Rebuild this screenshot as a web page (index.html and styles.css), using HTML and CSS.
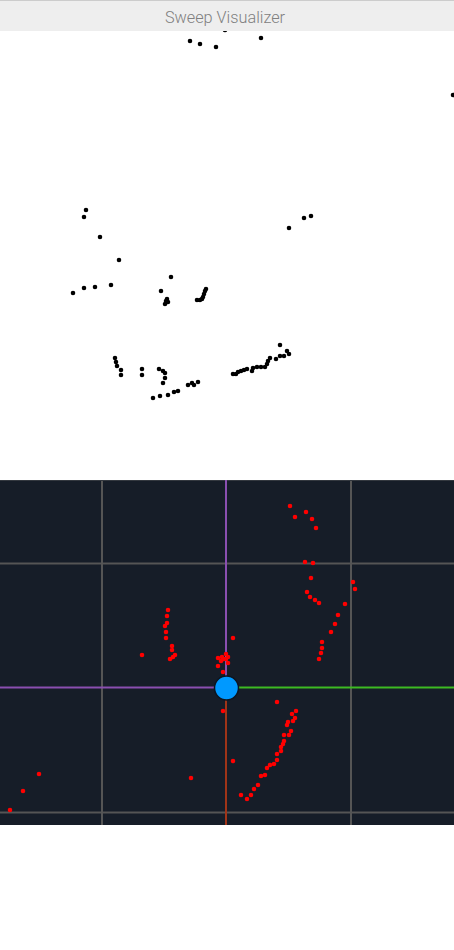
FILE: index.html
```html
<!DOCTYPE html>
<html lang="en">
<head>
  <meta charset="UTF-8">
  <title>Sweep Visualizer</title>
  <link rel="stylesheet" href="styles.css">
</head>
<body>

<header class="title-bar">Sweep Visualizer</header>

<!-- viewBoxes use page coordinates so the points are easy to compare -->
<svg class="view" width="454" height="449" viewBox="0 31 454 449">
  <path class="scan-black" d="M190 41h0M200 44h0M216 47h0M261 38h0M225 30h0M453 95h0
    M86 210h0M84 217h0M100 237h0M119 260h0M73 293h0M84 288h0M95 287h0M111 285h0M171 277h0M161 291h0
    M289 228h0M304 218h0M311 216h0
    M167 299h0M168 302h0M165 304h0M166 301h0
    M197 300h0M200 300h0M202 299h0M203 297h0M204 294h0M205 291h0M206 289h0
    M115 358h0M116 362h0M117 366h0M121 370h0M121 375h0M142 369h0M142 375h0
    M159 369h0M163 371h0M165 373h0M165 378h0M163 383h0
    M153 398h0M160 396h0M168 395h0M174 392h0M178 391h0M188 385h0M192 383h0M194 385h0M198 382h0
    M233 374h0M236 374h0M238 372h0M241 371h0M244 370h0M247 369h0M252 371h0M253 368h0M257 367h0M261 367h0M265 367h0
    M267 364h0M268 361h0M270 358h0M276 359h0M280 356h0M284 356h0M280 345h0M287 351h0M289 354h0"/>
</svg>

<svg class="view view-dark" width="454" height="345" viewBox="0 480 454 345">
  <path class="grid" d="M102 480V825M351 480V825M0 563.5H454M0 812.5H454"/>
  <path class="grid-top" d="M0 480.5H454"/>
  <path class="axis axis-up" d="M226 480V687"/>
  <path class="axis axis-left" d="M0 687.5H226"/>
  <path class="axis axis-right" d="M226 687.5H454"/>
  <path class="axis axis-down" d="M226 687V825"/>
  <path class="scan-red" d="M290 506h0M295 517h0M306 512h0M312 519h0M316 528h0M305 562h0M313 563h0M311 578h0M307 592h0M353 582h0M355 589h0
    M310 597h0M315 600h0M319 603h0M345 604h0M338 615h0M335 624h0M331 632h0M322 642h0M322 648h0M321 653h0M319 659h0
    M168 610h0M167 616h0M167 623h0M165 626h0M166 632h0M166 638h0M172 646h0M172 650h0M175 655h0M173 657h0M170 659h0M142 655h0M233 638h0
    M226 654h0M228 657h0M222 657h0M218 658h0M221 661h0M226 659h0M224 659h0M228 663h0M218 666h0M223 672h0
    M277 702h0M223 711h0M296 711h0M292 714h0M295 718h0M293 721h0M288 722h0M287 725h0M291 731h0M284 735h0M289 735h0
    M284 741h0M283 744h0M281 747h0M281 751h0M277 754h0M277 760h0M274 764h0M270 765h0M267 768h0M265 775h0M261 776h0
    M258 785h0M254 789h0M251 795h0M241 795h0M247 799h0M233 761h0M191 778h0M39 774h0M23 791h0M10 810h0"/>
  <circle class="sensor" cx="226.5" cy="688" r="12"/>
</svg>

</body>
</html>
```

FILE: styles.css
```css
* {
  box-sizing: border-box;
}
html, body {
  background: #FFF;
  margin: 0;
}
.title-bar {
  background: #EEE;
  border-top: 1px solid #CCC;
  color: #808080;
  font-family: Roboto, sans-serif;
  font-size: 16.25px;
  font-weight: 300;
  height: 31px;
  line-height: 33px;
  padding-right: 4px;
  text-align: center;
}
.view {
  display: block;
}
.view-dark {
  background: #161D28;
}
.scan-black, .scan-red, .grid, .grid-top, .axis {
  fill: none;
}
.scan-black {
  stroke: #000;
  stroke-linecap: round;
  stroke-width: 4.6px;
}
.scan-red {
  stroke: #F00;
  stroke-linecap: round;
  stroke-width: 4.6px;
}
.grid {
  stroke: #555;
  stroke-width: 2px;
}
.grid-top {
  stroke: #33383F;
  stroke-width: 1px;
}
.axis {
  stroke-width: 2px;
}
.axis-up, .axis-left {
  stroke: #8A4FB0;
}
.axis-right {
  stroke: #3DBA22;
}
.axis-down {
  stroke: #A03418;
}
.sensor {
  fill: #0099FF;
  stroke: #0D1520;
  stroke-width: 1.5px;
}
```
